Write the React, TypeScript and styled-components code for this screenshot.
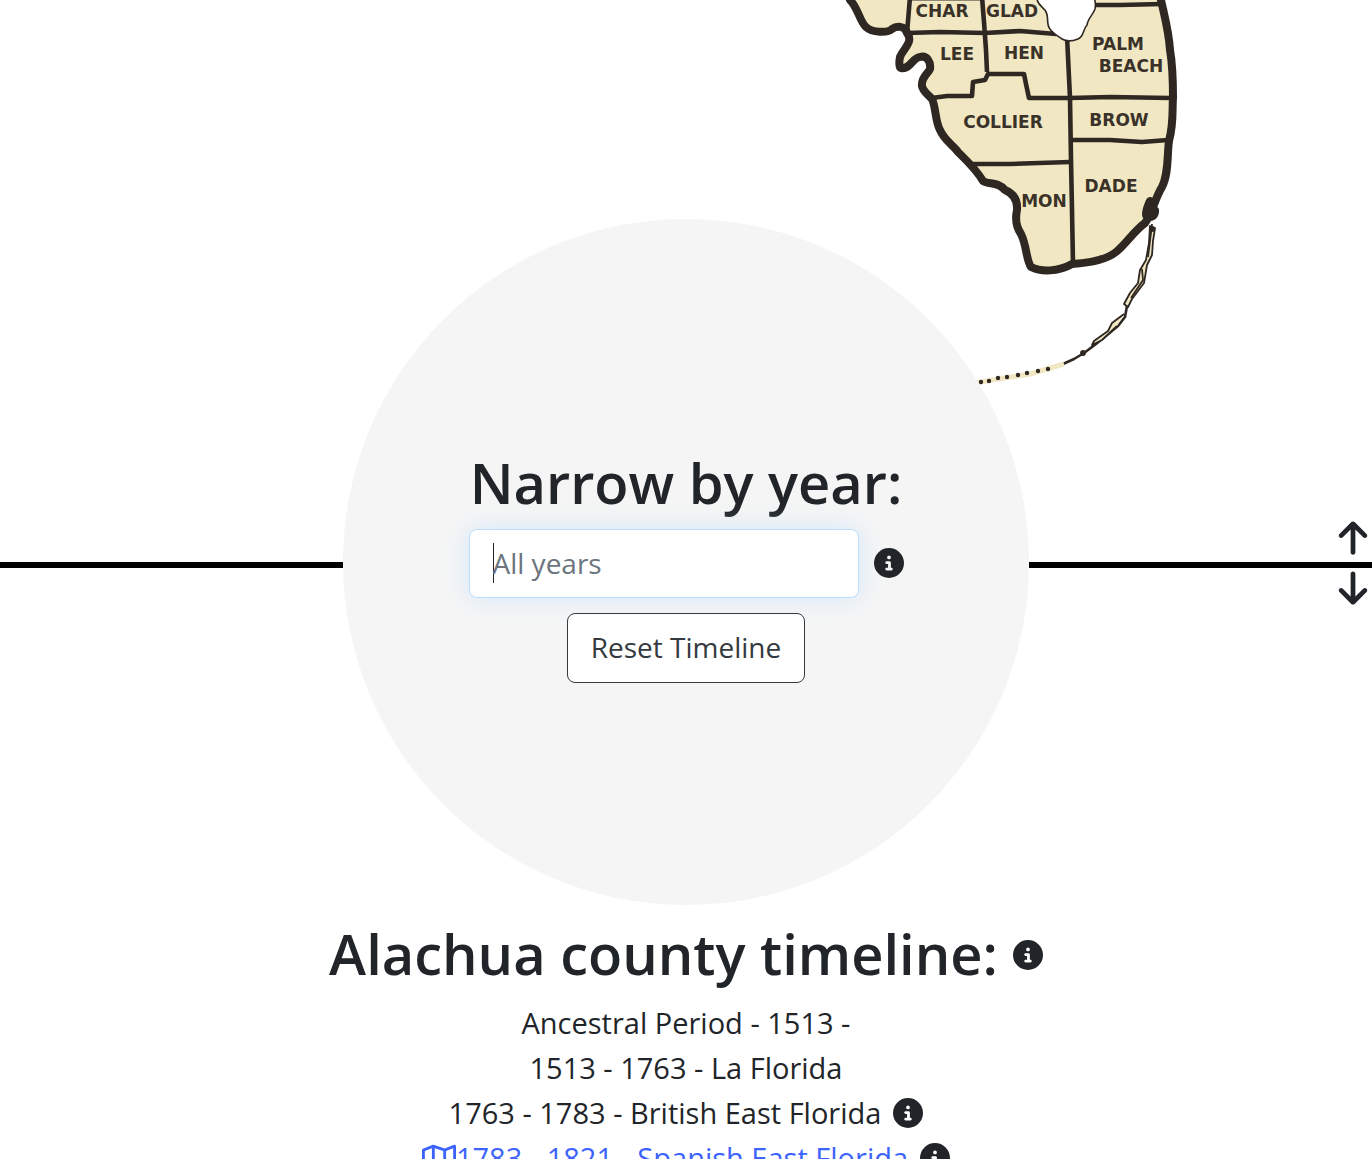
import React from "react";
import styled, { createGlobalStyle } from "styled-components";
import { FaArrowDown, FaArrowUp, FaCircleInfo, FaRegMap } from "react-icons/fa6";

const GlobalStyle = createGlobalStyle`
  *, *::before, *::after { box-sizing: border-box; }
  body {
    margin: 0;
    background: #fff;
    color: #212529;
    font-family: "Open Sans", "Noto Sans", sans-serif;
    font-size: 29px;
    line-height: 45px;
  }
`;

const Page = styled.main`
  height: 100vh;
  overflow-y: auto;
  scrollbar-width: none;
`;

const Stage = styled.section`
  position: relative;
  display: grid;
  grid-template-columns: minmax(0, 1fr);
  & > * { grid-area: 1 / 1; }
`;

const FloridaMap = styled.svg`
  width: 25%;
  margin-left: 61%;
  align-self: start;
  display: block;
`;

const MapLabel = styled.text`
  font: bold 17px "DejaVu Sans", sans-serif;
  fill: #3a3129;
  text-anchor: middle;
`;

const Divider = styled.div`
  display: grid;
  grid-template-columns: 1fr 50% 1fr;
  align-items: center;
  margin-top: 219px;
`;

const Rail = styled.div`
  height: 6px;
  margin-top: 6px;
  background: #000;
`;

const Circle = styled.div`
  aspect-ratio: 1;
  border-radius: 50%;
  background: #f5f5f5;
  display: flex;
  align-items: center;
  justify-content: center;
`;

const YearForm = styled.form`
  display: flex;
  flex-direction: column;
  align-items: center;
  gap: 15px;
`;

const Heading = styled.h2`
  margin: 0;
  padding-top: 8px;
  font-size: 56px;
  font-weight: 600;
  line-height: 64px;
`;

const FieldRow = styled.div`
  display: flex;
  align-items: center;
  gap: 15px;
`;

const TitleRow = styled.div`
  display: flex;
  align-items: flex-end;
  gap: 15px;
  & > button { padding-bottom: 15px; }
`;

const YearInput = styled.input`
  width: 390px;
  height: 69px;
  padding: 0 23px;
  border: 1px solid #bddfff;
  border-radius: 8px;
  background-color: #fff;
  box-shadow: 0 0 24px rgba(189, 223, 255, 0.6);
  font: inherit;
  font-size: 28px;
  color: inherit;
  caret-color: transparent;
  outline: none;
  &::placeholder { color: #6c757d; opacity: 1; }
  &:focus:placeholder-shown {
    background-image: linear-gradient(#212529, #212529);
    background-size: 1px 40px;
    background-position: 23px center;
    background-repeat: no-repeat;
  }
`;

const ResetButton = styled.button`
  height: 70px;
  padding: 0 23px;
  border: 1px solid #343a40;
  border-radius: 8px;
  background: #fff;
  color: #343a40;
  font: inherit;
  font-size: 28px;
`;

const IconButton = styled.button<{ $size?: number }>`
  display: flex;
  padding: 0;
  border: 0;
  background: none;
  color: #212529;
  font-size: ${(p) => p.$size ?? 30}px;
`;

const ScrollButtons = styled.nav`
  position: absolute;
  right: 0;
  bottom: 298px;
  display: flex;
  flex-direction: column;
  gap: 12px;
`;

const Timeline = styled.section`
  display: flex;
  flex-direction: column;
  align-items: center;
  gap: 15px;
  padding: 8px 15px 60px;
`;

const TimelineList = styled.ul`
  margin: 0;
  padding: 0;
  list-style: none;
`;

const Entry = styled.li`
  display: flex;
  align-items: center;
  justify-content: center;
  gap: 12px;
`;

const EntryLink = styled.a`
  display: flex;
  align-items: center;
  color: #3d63ff;
  text-decoration: none;
  svg { font-size: 34px; }
`;

const Info = ({ label }: { label: string }) => (
  <IconButton type="button" aria-label={label}><FaCircleInfo /></IconButton>
);

const COAST =
  "M846 -12 L850 0 C858 8 860 22 866 27 C872 33 888 33 892 29 C896 26 905 25 907 33 C914 42 903 49 900 57 C899 62 899 68 901 68 C910 70 913 57 920 57 C927 55 931 62 930 69 C928 74 921 77 922 86 C923 92 929 95 932 99 C936 107 935 121 940 130 C944 140 954 146 958 152 C965 159 976 169 983 181 C989 185 997 181 1005 190 C1012 193 1018 199 1017 210 C1015 219 1017 228 1021 234 C1027 246 1026 260 1031 267 C1041 272 1058 272 1072 264 C1089 263 1106 260 1116 252 C1126 244 1133 232 1145 223 C1152 214 1155 198 1162 187 C1169 173 1167 154 1169 141 C1174 122 1172 109 1173 98 C1173 80 1173 67 1170 50 C1169 32 1164 14 1161 0 L1158 -12";

const LABELS: [string, number, number][] = [
  ["CHAR", 942, 17],
  ["GLAD", 1012, 17],
  ["LEE", 957, 60],
  ["HEN", 1024, 59],
  ["PALM", 1118, 50],
  ["BEACH", 1131, 72],
  ["COLLIER", 1003, 128],
  ["BROW", 1119, 126],
  ["DADE", 1111, 192],
  ["MON", 1044, 207],
];

const KEY_DOTS: [number, number][] = [
  [1048, 369], [1038, 371], [1027, 373], [1018, 375],
  [1007, 377], [998, 378], [989, 381], [981, 382],
];

const CountyMap = () => (
  <FloridaMap viewBox="837 0 343 390" role="img" aria-label="Map of Florida counties">
    <path d={COAST} fill="#f1e8c3" stroke="#2e2722" strokeWidth="8" strokeLinejoin="round" />
    <g fill="none" stroke="#2e2722" strokeWidth="4.6" strokeLinejoin="round">
      <path d="M910 -3 L907 33 L940 32 L985 33 L1020 31 L1056 34" />
      <path d="M982 -3 L984 22 L986 50 L987 72" />
      <path d="M932 98 L947 96 L972 96 L973 82 L985 80 L988 74 L1024 74 L1026 84 L1029 98 L1070 98 L1110 97 L1170 98" />
      <path d="M1067 36 L1070 98 L1071 160 L1072 210 L1073 264" />
      <path d="M1094 5 L1120 5 L1162 4" />
      <path d="M1072 140 L1110 140 L1142 142 L1168 140" />
      <path d="M973 164 L1010 164 L1070 162" />
    </g>
    <path d="M909 0 H980" stroke="#2e2722" strokeWidth="1" />
    <path
      d="M1037 -3 C1036 5 1045 8 1046 12 C1049 17 1046 25 1050 29 C1053 34 1058 36 1062 39 C1067 42 1073 41 1078 39 C1084 37 1083 29 1087 25 C1088 18 1093 15 1095 9 C1096 4 1095 0 1094 -3 Z"
      fill="#fff"
      stroke="#2e2722"
      strokeWidth="1.6"
    />
    <path d="M1146 200 C1148 195 1155 196 1154 203 L1159 209 C1160 219 1152 223 1146 220 C1139 218 1143 207 1146 200 Z" fill="#2e2722" />
    {LABELS.map(([name, x, y]) => (
      <MapLabel key={name} x={x} y={y}>{name}</MapLabel>
    ))}
    <g fill="none" stroke="#2e2722" strokeWidth="1.8" strokeLinejoin="round">
      <path d="M1150 226 L1155 228 L1153 241 L1152 255 L1147 265 L1144 283 L1132 299 L1128 307 L1124 304 L1130 293 L1138 283 L1140 270 L1146 260 L1149 243 Z" fill="#f1e8c3" />
      <path d="M1152 224 L1151 233 L1148 257 M1142 269 L1143 280 L1131 298" />
      <path d="M1127 306 L1125 317 L1118 326 L1107 335 L1096 344 L1084 353 L1074 359 L1063 364" strokeWidth="2.6" />
      <path d="M1124 314 L1112 323 L1108 331 L1094 341 L1092 345 L1102 340 L1117 326" fill="#f1e8c3" />
      <circle cx="1083" cy="353" r="2" fill="#2e2722" />
      <circle cx="1152" cy="229" r="2" fill="#2e2722" />
    </g>
    <path d="M975 383 L998 379 L1030 374 L1064 364" stroke="#f1e8c3" strokeWidth="5" fill="none" />
    {KEY_DOTS.map(([x, y]) => (
      <circle key={x} cx={x} cy={y} r="2.2" fill="#2e2722" />
    ))}
  </FloridaMap>
);

export default function App() {
  return (
    <Page>
      <GlobalStyle />
      <Stage>
        <CountyMap />
        <Divider>
          <Rail />
          <Circle>
            <YearForm onSubmit={(e: React.FormEvent) => e.preventDefault()}>
              <Heading as="label" htmlFor="year">Narrow by year:</Heading>
              <FieldRow>
                <YearInput id="year" type="text" placeholder="All years" autoComplete="off" autoFocus />
                <Info label="About years" />
              </FieldRow>
              <ResetButton type="reset">Reset Timeline</ResetButton>
            </YearForm>
          </Circle>
          <Rail />
        </Divider>
        <ScrollButtons aria-label="Scroll">
          <IconButton type="button" aria-label="Scroll up" $size={38}><FaArrowUp /></IconButton>
          <IconButton type="button" aria-label="Scroll down" $size={38}><FaArrowDown /></IconButton>
        </ScrollButtons>
      </Stage>
      <Timeline>
        <TitleRow>
          <Heading>Alachua county timeline:</Heading>
          <Info label="About the timeline" />
        </TitleRow>
        <TimelineList>
          <Entry>Ancestral Period - 1513 -</Entry>
          <Entry>1513 - 1763 - La Florida</Entry>
          <Entry>1763 - 1783 - British East Florida <Info label="About British East Florida" /></Entry>
          <Entry>
            <EntryLink href="#spanish-east-florida"><FaRegMap />1783 - 1821 - Spanish East Florida</EntryLink>
            <Info label="About Spanish East Florida" />
          </Entry>
        </TimelineList>
      </Timeline>
    </Page>
  );
}
